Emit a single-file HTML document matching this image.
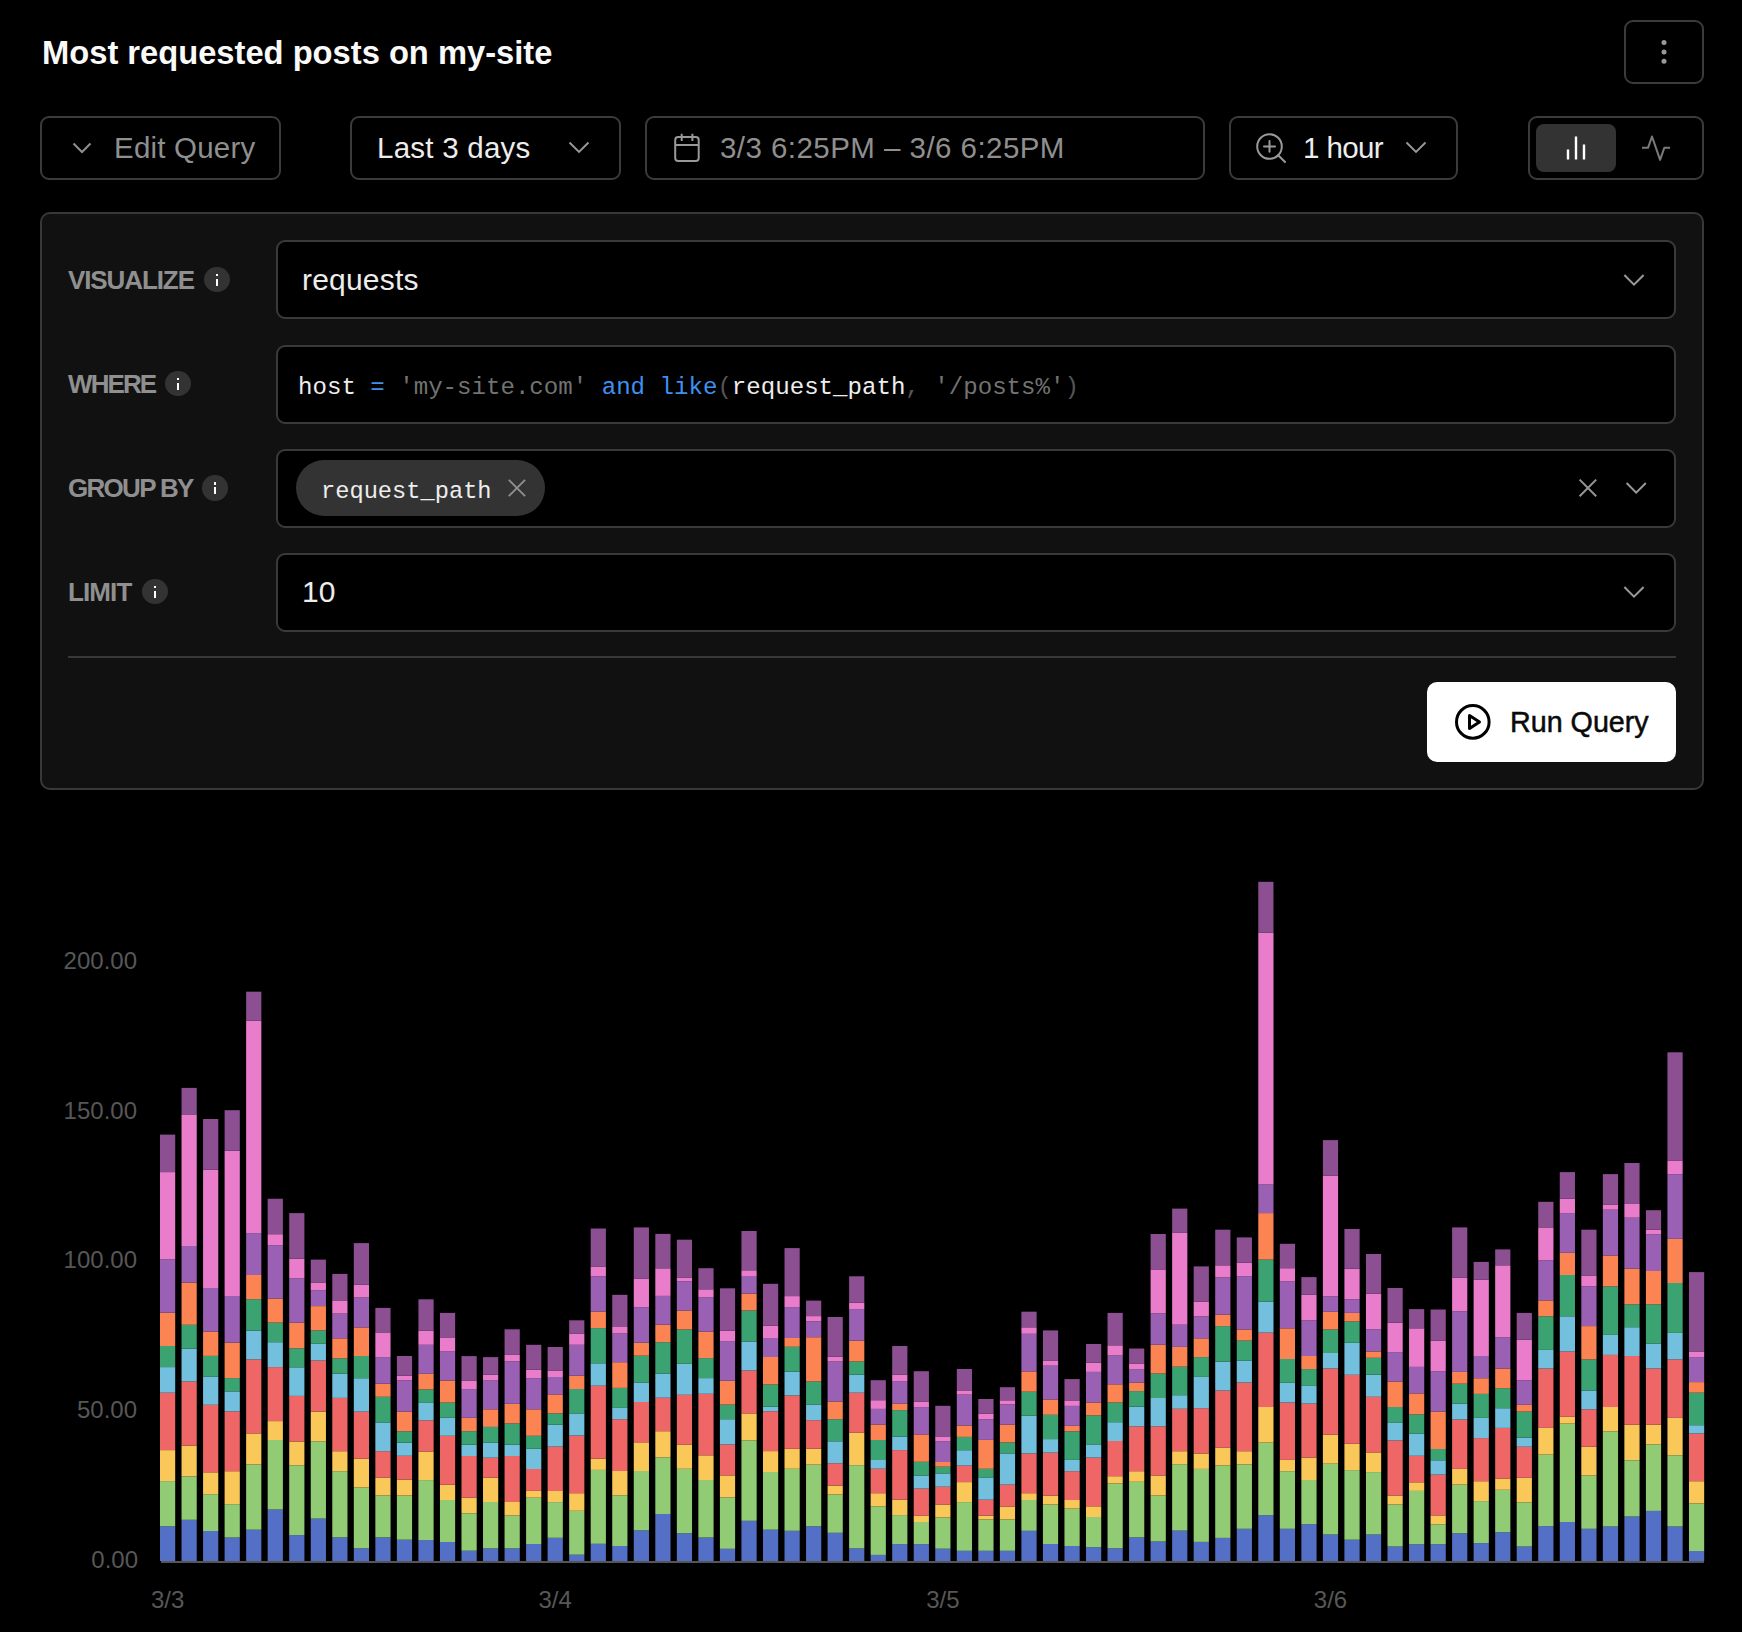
<!DOCTYPE html>
<html><head><meta charset="utf-8">
<style>
*{box-sizing:border-box;margin:0;padding:0}
html,body{width:1742px;height:1632px;background:#000;overflow:hidden}
body{position:relative;font-family:"Liberation Sans",sans-serif;color:#ededed}
.abs{position:absolute}
.title{left:42px;top:31px;font-size:32.7px;font-weight:bold;color:#fafafa;white-space:nowrap;line-height:44px}
.btn{position:absolute;border:2px solid #3b3b3b;border-radius:9px;background:#000}
.txt{position:absolute;white-space:nowrap;line-height:1}
.panel{left:40px;top:212px;width:1664px;height:578px;background:#111;border:2px solid #383838;border-radius:10px}
.label{position:absolute;left:68px;font-size:26px;letter-spacing:-0.9px;font-weight:bold;color:#8f8f8f;white-space:nowrap;line-height:1}
.info{position:absolute;width:25.4px;height:25.4px;border-radius:50%;background:#333}
.info:before{content:"";position:absolute;left:11.6px;top:7.2px;width:2.2px;height:2.2px;background:#fff}
.info:after{content:"";position:absolute;left:11.6px;top:12.2px;width:2.2px;height:6.8px;background:#fff}
.field{position:absolute;left:276px;width:1400px;height:79px;background:#000;border:2px solid #3a3a3a;border-radius:9px}
.mono{font-family:"Liberation Mono",monospace}
</style></head><body>
<div class="abs title">Most requested posts on my-site</div>
<div class="btn" style="left:1624px;top:20px;width:80px;height:64px"></div>
<svg class="abs" style="left:1624px;top:20px" width="80" height="64">
<circle cx="40" cy="22.6" r="2.5" fill="#999"/><circle cx="40" cy="31.9" r="2.5" fill="#999"/><circle cx="40" cy="41.2" r="2.5" fill="#999"/>
</svg>

<!-- toolbar -->
<div class="btn" style="left:40px;top:116px;width:241px;height:64px"></div>
<svg class="abs" style="left:70px;top:138px" width="24" height="20"><path d="M3.5 5.5 L12 14 L20.5 5.5" fill="none" stroke="#8f8f8f" stroke-width="2"/></svg>
<div class="txt" style="left:114px;top:133px;font-size:29.5px;letter-spacing:0.2px;color:#8f8f8f">Edit Query</div>

<div class="btn" style="left:350px;top:116px;width:271px;height:64px"></div>
<div class="txt" style="left:377px;top:133px;font-size:29.5px;letter-spacing:0.25px;color:#ededed">Last 3 days</div>
<svg class="abs" style="left:566px;top:138px" width="26" height="20"><path d="M3.5 4.5 L13 14 L22.5 4.5" fill="none" stroke="#999" stroke-width="1.9"/></svg>

<div class="btn" style="left:645px;top:116px;width:560px;height:64px"></div>
<svg class="abs" style="left:670px;top:130px" width="34" height="34"><rect x="5.2" y="7.1" width="23.5" height="24" rx="3" fill="none" stroke="#999" stroke-width="2"/><path d="M5.2 15 H28.7 M11.7 3.8 V10.9 M22.4 3.8 V10.9" stroke="#999" stroke-width="2"/></svg>
<div class="txt" style="left:720px;top:133px;font-size:29.5px;letter-spacing:0.45px;color:#8f8f8f">3/3 6:25PM – 3/6 6:25PM</div>

<div class="btn" style="left:1229px;top:116px;width:229px;height:64px"></div>
<svg class="abs" style="left:1252px;top:130px" width="40" height="40"><circle cx="17.5" cy="16.5" r="12.3" fill="none" stroke="#999" stroke-width="2"/><path d="M17.5 11 V21.8 M12 16.4 H23 M26.2 25.2 L33 32" stroke="#999" stroke-width="2" stroke-linecap="round"/></svg>
<div class="txt" style="left:1303px;top:133px;font-size:29.5px;letter-spacing:-0.6px;color:#ededed">1 hour</div>
<svg class="abs" style="left:1403px;top:138px" width="26" height="20"><path d="M3.5 4.5 L13 14 L22.5 4.5" fill="none" stroke="#999" stroke-width="1.9"/></svg>

<div class="btn" style="left:1528px;top:116px;width:176px;height:64px"></div>
<div class="abs" style="left:1536px;top:124px;width:80px;height:48px;background:#333;border-radius:8px"></div>
<svg class="abs" style="left:1536px;top:124px" width="80" height="48"><path d="M32 25.5 V35.5 M40 12.5 V35.5 M48 20.5 V35.5" stroke="#fff" stroke-width="2.4"/></svg>
<svg class="abs" style="left:1636px;top:130px" width="40" height="36"><path d="M6 17.8 H12 L16 6.5 L24.1 29.8 L28.3 17.8 H34.1" fill="none" stroke="#7a7a7a" stroke-width="2" stroke-linejoin="round"/></svg>

<!-- panel -->
<div class="abs panel"></div>

<div class="label" style="top:267px;letter-spacing:-1.1px">VISUALIZE</div>
<div class="info" style="left:204.3px;top:267px"></div>
<div class="field" style="top:240px"></div>
<div class="txt" style="left:302px;top:265px;font-size:30px;letter-spacing:0.2px;color:#ededed">requests</div>
<svg class="abs" style="left:1620px;top:268px" width="28" height="22"><path d="M4.4 7 L14 16.6 L23.6 7" fill="none" stroke="#999" stroke-width="2"/></svg>

<div class="label" style="top:371px;letter-spacing:-1.9px">WHERE</div>
<div class="info" style="left:165.3px;top:371px"></div>
<div class="field" style="top:345px"></div>
<div class="txt mono" style="left:298px;top:376px;font-size:24.1px;color:#ededed">host <span style="color:#3e91f0">=</span> <span style="color:#727272">'my-site.com'</span> <span style="color:#3e91f0">and</span> <span style="color:#3e91f0">like</span><span style="color:#555">(</span>request_path<span style="color:#555">,</span> <span style="color:#727272">'/posts%'</span><span style="color:#555">)</span></div>

<div class="label" style="top:475px;letter-spacing:-1.7px">GROUP BY</div>
<div class="info" style="left:202.3px;top:475.2px"></div>
<div class="field" style="top:449px"></div>
<div class="abs" style="left:296px;top:460px;width:249px;height:56px;border-radius:28px;background:#333"></div>
<div class="txt mono" style="left:321px;top:480px;font-size:23.7px;color:#ededed">request_path</div>
<svg class="abs" style="left:505px;top:476px" width="24" height="24"><path d="M3.8 3.8 L20.1 20.1 M20.1 3.8 L3.8 20.1" stroke="#8f8f8f" stroke-width="1.9"/></svg>
<svg class="abs" style="left:1576px;top:476px" width="24" height="24"><path d="M3.6 3.6 L20.2 20.2 M20.2 3.6 L3.6 20.2" stroke="#969696" stroke-width="2"/></svg>
<svg class="abs" style="left:1622px;top:476px" width="28" height="22"><path d="M4.6 7 L14.2 16.6 L23.8 7" fill="none" stroke="#999" stroke-width="2"/></svg>

<div class="label" style="top:579px">LIMIT</div>
<div class="info" style="left:142.3px;top:579px"></div>
<div class="field" style="top:553px"></div>
<div class="txt" style="left:302px;top:577px;font-size:30px;color:#ededed">10</div>
<svg class="abs" style="left:1620px;top:580px" width="28" height="22"><path d="M4.4 7 L14 16.6 L23.6 7" fill="none" stroke="#999" stroke-width="2"/></svg>

<div class="abs" style="left:68px;top:656px;width:1608px;height:2px;background:#383838"></div>
<div class="abs" style="left:1427px;top:682px;width:249px;height:80px;background:#fff;border-radius:10px"></div>
<svg class="abs" style="left:1450px;top:700px" width="46" height="46"><circle cx="22.8" cy="21.9" r="16.3" fill="none" stroke="#000" stroke-width="3"/><path d="M19.5 15.5 L29.5 22 L19.5 28.5 Z" fill="none" stroke="#000" stroke-width="3" stroke-linejoin="round"/></svg>
<div class="txt" style="left:1510px;top:708px;font-size:28.7px;color:#0a0a0a;-webkit-text-stroke:0.5px #0a0a0a">Run Query</div>

<!-- chart -->
<svg class="abs" style="left:0;top:0" width="1742" height="1632">
<g font-family="Liberation Sans" font-size="24" fill="#575757" text-anchor="end">
<text x="137" y="969">200.00</text>
<text x="137" y="1119">150.00</text>
<text x="137" y="1268">100.00</text>
<text x="137" y="1418">50.00</text>
<text x="138" y="1568">0.00</text>
</g>
<g font-family="Liberation Sans" font-size="24" fill="#575757" text-anchor="middle">
<text x="167.6" y="1608">3/3</text>
<text x="555.2" y="1608">3/4</text>
<text x="942.9" y="1608">3/5</text>
<text x="1330.5" y="1608">3/6</text>
</g>
<rect x="160.00" y="1526.30" width="15.20" height="34.70" fill="#5470c6"/>
<rect x="160.00" y="1481.10" width="15.20" height="45.20" fill="#91cc75"/>
<rect x="160.00" y="1450.10" width="15.20" height="31.00" fill="#fac858"/>
<rect x="160.00" y="1392.70" width="15.20" height="57.40" fill="#ee6666"/>
<rect x="160.00" y="1367.10" width="15.20" height="25.60" fill="#73c0de"/>
<rect x="160.00" y="1346.00" width="15.20" height="21.10" fill="#3ba272"/>
<rect x="160.00" y="1312.70" width="15.20" height="33.30" fill="#fc8452"/>
<rect x="160.00" y="1259.20" width="15.20" height="53.50" fill="#9a60b4"/>
<rect x="160.00" y="1172.10" width="15.20" height="87.10" fill="#ea7ccc"/>
<rect x="160.00" y="1134.60" width="15.20" height="37.50" fill="#8b4f92"/>
<rect x="181.53" y="1519.80" width="15.20" height="41.20" fill="#5470c6"/>
<rect x="181.53" y="1476.40" width="15.20" height="43.40" fill="#91cc75"/>
<rect x="181.53" y="1445.60" width="15.20" height="30.80" fill="#fac858"/>
<rect x="181.53" y="1381.50" width="15.20" height="64.10" fill="#ee6666"/>
<rect x="181.53" y="1348.60" width="15.20" height="32.90" fill="#73c0de"/>
<rect x="181.53" y="1324.80" width="15.20" height="23.80" fill="#3ba272"/>
<rect x="181.53" y="1282.60" width="15.20" height="42.20" fill="#fc8452"/>
<rect x="181.53" y="1246.00" width="15.20" height="36.60" fill="#9a60b4"/>
<rect x="181.53" y="1114.40" width="15.20" height="131.60" fill="#ea7ccc"/>
<rect x="181.53" y="1087.90" width="15.20" height="26.50" fill="#8b4f92"/>
<rect x="203.07" y="1531.00" width="15.20" height="30.00" fill="#5470c6"/>
<rect x="203.07" y="1494.20" width="15.20" height="36.80" fill="#91cc75"/>
<rect x="203.07" y="1472.30" width="15.20" height="21.90" fill="#fac858"/>
<rect x="203.07" y="1404.80" width="15.20" height="67.50" fill="#ee6666"/>
<rect x="203.07" y="1376.80" width="15.20" height="28.00" fill="#73c0de"/>
<rect x="203.07" y="1355.90" width="15.20" height="20.90" fill="#3ba272"/>
<rect x="203.07" y="1331.60" width="15.20" height="24.30" fill="#fc8452"/>
<rect x="203.07" y="1288.00" width="15.20" height="43.60" fill="#9a60b4"/>
<rect x="203.07" y="1169.60" width="15.20" height="118.40" fill="#ea7ccc"/>
<rect x="203.07" y="1119.00" width="15.20" height="50.60" fill="#8b4f92"/>
<rect x="224.61" y="1537.50" width="15.20" height="23.50" fill="#5470c6"/>
<rect x="224.61" y="1504.20" width="15.20" height="33.30" fill="#91cc75"/>
<rect x="224.61" y="1471.20" width="15.20" height="33.00" fill="#fac858"/>
<rect x="224.61" y="1411.40" width="15.20" height="59.80" fill="#ee6666"/>
<rect x="224.61" y="1391.40" width="15.20" height="20.00" fill="#73c0de"/>
<rect x="224.61" y="1378.10" width="15.20" height="13.30" fill="#3ba272"/>
<rect x="224.61" y="1342.60" width="15.20" height="35.50" fill="#fc8452"/>
<rect x="224.61" y="1296.00" width="15.20" height="46.60" fill="#9a60b4"/>
<rect x="224.61" y="1150.80" width="15.20" height="145.20" fill="#ea7ccc"/>
<rect x="224.61" y="1110.20" width="15.20" height="40.60" fill="#8b4f92"/>
<rect x="246.14" y="1529.70" width="15.20" height="31.30" fill="#5470c6"/>
<rect x="246.14" y="1464.40" width="15.20" height="65.30" fill="#91cc75"/>
<rect x="246.14" y="1433.40" width="15.20" height="31.00" fill="#fac858"/>
<rect x="246.14" y="1359.40" width="15.20" height="74.00" fill="#ee6666"/>
<rect x="246.14" y="1330.60" width="15.20" height="28.80" fill="#73c0de"/>
<rect x="246.14" y="1299.20" width="15.20" height="31.40" fill="#3ba272"/>
<rect x="246.14" y="1275.00" width="15.20" height="24.20" fill="#fc8452"/>
<rect x="246.14" y="1233.10" width="15.20" height="41.90" fill="#9a60b4"/>
<rect x="246.14" y="1020.60" width="15.20" height="212.50" fill="#ea7ccc"/>
<rect x="246.14" y="991.70" width="15.20" height="28.90" fill="#8b4f92"/>
<rect x="267.68" y="1509.50" width="15.20" height="51.50" fill="#5470c6"/>
<rect x="267.68" y="1440.00" width="15.20" height="69.50" fill="#91cc75"/>
<rect x="267.68" y="1421.10" width="15.20" height="18.90" fill="#fac858"/>
<rect x="267.68" y="1367.10" width="15.20" height="54.00" fill="#ee6666"/>
<rect x="267.68" y="1342.20" width="15.20" height="24.90" fill="#73c0de"/>
<rect x="267.68" y="1322.60" width="15.20" height="19.60" fill="#3ba272"/>
<rect x="267.68" y="1298.50" width="15.20" height="24.10" fill="#fc8452"/>
<rect x="267.68" y="1245.20" width="15.20" height="53.30" fill="#9a60b4"/>
<rect x="267.68" y="1234.20" width="15.20" height="11.00" fill="#ea7ccc"/>
<rect x="267.68" y="1198.75" width="15.20" height="35.45" fill="#8b4f92"/>
<rect x="289.21" y="1535.10" width="15.20" height="25.90" fill="#5470c6"/>
<rect x="289.21" y="1465.30" width="15.20" height="69.80" fill="#91cc75"/>
<rect x="289.21" y="1441.50" width="15.20" height="23.80" fill="#fac858"/>
<rect x="289.21" y="1395.90" width="15.20" height="45.60" fill="#ee6666"/>
<rect x="289.21" y="1367.30" width="15.20" height="28.60" fill="#73c0de"/>
<rect x="289.21" y="1348.30" width="15.20" height="19.00" fill="#3ba272"/>
<rect x="289.21" y="1322.70" width="15.20" height="25.60" fill="#fc8452"/>
<rect x="289.21" y="1278.20" width="15.20" height="44.50" fill="#9a60b4"/>
<rect x="289.21" y="1258.70" width="15.20" height="19.50" fill="#ea7ccc"/>
<rect x="289.21" y="1213.10" width="15.20" height="45.60" fill="#8b4f92"/>
<rect x="310.75" y="1518.60" width="15.20" height="42.40" fill="#5470c6"/>
<rect x="310.75" y="1441.30" width="15.20" height="77.30" fill="#91cc75"/>
<rect x="310.75" y="1411.60" width="15.20" height="29.70" fill="#fac858"/>
<rect x="310.75" y="1360.50" width="15.20" height="51.10" fill="#ee6666"/>
<rect x="310.75" y="1343.80" width="15.20" height="16.70" fill="#73c0de"/>
<rect x="310.75" y="1330.40" width="15.20" height="13.40" fill="#3ba272"/>
<rect x="310.75" y="1306.10" width="15.20" height="24.30" fill="#fc8452"/>
<rect x="310.75" y="1290.20" width="15.20" height="15.90" fill="#9a60b4"/>
<rect x="310.75" y="1282.50" width="15.20" height="7.70" fill="#ea7ccc"/>
<rect x="310.75" y="1259.60" width="15.20" height="22.90" fill="#8b4f92"/>
<rect x="332.28" y="1537.40" width="15.20" height="23.60" fill="#5470c6"/>
<rect x="332.28" y="1471.20" width="15.20" height="66.20" fill="#91cc75"/>
<rect x="332.28" y="1451.20" width="15.20" height="20.00" fill="#fac858"/>
<rect x="332.28" y="1397.90" width="15.20" height="53.30" fill="#ee6666"/>
<rect x="332.28" y="1373.70" width="15.20" height="24.20" fill="#73c0de"/>
<rect x="332.28" y="1358.30" width="15.20" height="15.40" fill="#3ba272"/>
<rect x="332.28" y="1338.30" width="15.20" height="20.00" fill="#fc8452"/>
<rect x="332.28" y="1313.60" width="15.20" height="24.70" fill="#9a60b4"/>
<rect x="332.28" y="1300.40" width="15.20" height="13.20" fill="#ea7ccc"/>
<rect x="332.28" y="1273.90" width="15.20" height="26.50" fill="#8b4f92"/>
<rect x="353.81" y="1548.30" width="15.20" height="12.70" fill="#5470c6"/>
<rect x="353.81" y="1487.50" width="15.20" height="60.80" fill="#91cc75"/>
<rect x="353.81" y="1458.70" width="15.20" height="28.80" fill="#fac858"/>
<rect x="353.81" y="1411.60" width="15.20" height="47.10" fill="#ee6666"/>
<rect x="353.81" y="1378.20" width="15.20" height="33.40" fill="#73c0de"/>
<rect x="353.81" y="1356.00" width="15.20" height="22.20" fill="#3ba272"/>
<rect x="353.81" y="1327.40" width="15.20" height="28.60" fill="#fc8452"/>
<rect x="353.81" y="1297.50" width="15.20" height="29.90" fill="#9a60b4"/>
<rect x="353.81" y="1284.80" width="15.20" height="12.70" fill="#ea7ccc"/>
<rect x="353.81" y="1243.10" width="15.20" height="41.70" fill="#8b4f92"/>
<rect x="375.35" y="1537.40" width="15.20" height="23.60" fill="#5470c6"/>
<rect x="375.35" y="1495.50" width="15.20" height="41.90" fill="#91cc75"/>
<rect x="375.35" y="1477.50" width="15.20" height="18.00" fill="#fac858"/>
<rect x="375.35" y="1451.20" width="15.20" height="26.30" fill="#ee6666"/>
<rect x="375.35" y="1422.40" width="15.20" height="28.80" fill="#73c0de"/>
<rect x="375.35" y="1396.80" width="15.20" height="25.60" fill="#3ba272"/>
<rect x="375.35" y="1383.70" width="15.20" height="13.10" fill="#fc8452"/>
<rect x="375.35" y="1357.10" width="15.20" height="26.60" fill="#9a60b4"/>
<rect x="375.35" y="1332.40" width="15.20" height="24.70" fill="#ea7ccc"/>
<rect x="375.35" y="1307.90" width="15.20" height="24.50" fill="#8b4f92"/>
<rect x="396.88" y="1539.70" width="15.20" height="21.30" fill="#5470c6"/>
<rect x="396.88" y="1495.50" width="15.20" height="44.20" fill="#91cc75"/>
<rect x="396.88" y="1479.60" width="15.20" height="15.90" fill="#fac858"/>
<rect x="396.88" y="1455.80" width="15.20" height="23.80" fill="#ee6666"/>
<rect x="396.88" y="1442.60" width="15.20" height="13.20" fill="#73c0de"/>
<rect x="396.88" y="1431.30" width="15.20" height="11.30" fill="#3ba272"/>
<rect x="396.88" y="1411.60" width="15.20" height="19.70" fill="#fc8452"/>
<rect x="396.88" y="1380.30" width="15.20" height="31.30" fill="#9a60b4"/>
<rect x="396.88" y="1375.70" width="15.20" height="4.60" fill="#ea7ccc"/>
<rect x="396.88" y="1356.00" width="15.20" height="19.70" fill="#8b4f92"/>
<rect x="418.42" y="1540.00" width="15.20" height="21.00" fill="#5470c6"/>
<rect x="418.42" y="1480.10" width="15.20" height="59.90" fill="#91cc75"/>
<rect x="418.42" y="1451.50" width="15.20" height="28.60" fill="#fac858"/>
<rect x="418.42" y="1420.30" width="15.20" height="31.20" fill="#ee6666"/>
<rect x="418.42" y="1402.90" width="15.20" height="17.40" fill="#73c0de"/>
<rect x="418.42" y="1389.40" width="15.20" height="13.50" fill="#3ba272"/>
<rect x="418.42" y="1373.80" width="15.20" height="15.60" fill="#fc8452"/>
<rect x="418.42" y="1344.80" width="15.20" height="29.00" fill="#9a60b4"/>
<rect x="418.42" y="1330.60" width="15.20" height="14.20" fill="#ea7ccc"/>
<rect x="418.42" y="1299.30" width="15.20" height="31.30" fill="#8b4f92"/>
<rect x="439.95" y="1542.00" width="15.20" height="19.00" fill="#5470c6"/>
<rect x="439.95" y="1500.00" width="15.20" height="42.00" fill="#91cc75"/>
<rect x="439.95" y="1484.70" width="15.20" height="15.30" fill="#fac858"/>
<rect x="439.95" y="1435.80" width="15.20" height="48.90" fill="#ee6666"/>
<rect x="439.95" y="1417.80" width="15.20" height="18.00" fill="#73c0de"/>
<rect x="439.95" y="1402.60" width="15.20" height="15.20" fill="#3ba272"/>
<rect x="439.95" y="1380.50" width="15.20" height="22.10" fill="#fc8452"/>
<rect x="439.95" y="1351.50" width="15.20" height="29.00" fill="#9a60b4"/>
<rect x="439.95" y="1337.40" width="15.20" height="14.10" fill="#ea7ccc"/>
<rect x="439.95" y="1312.90" width="15.20" height="24.50" fill="#8b4f92"/>
<rect x="461.49" y="1550.70" width="15.20" height="10.30" fill="#5470c6"/>
<rect x="461.49" y="1513.30" width="15.20" height="37.40" fill="#91cc75"/>
<rect x="461.49" y="1497.70" width="15.20" height="15.60" fill="#fac858"/>
<rect x="461.49" y="1456.00" width="15.20" height="41.70" fill="#ee6666"/>
<rect x="461.49" y="1444.70" width="15.20" height="11.30" fill="#73c0de"/>
<rect x="461.49" y="1431.20" width="15.20" height="13.50" fill="#3ba272"/>
<rect x="461.49" y="1417.80" width="15.20" height="13.40" fill="#fc8452"/>
<rect x="461.49" y="1389.10" width="15.20" height="28.70" fill="#9a60b4"/>
<rect x="461.49" y="1380.50" width="15.20" height="8.60" fill="#ea7ccc"/>
<rect x="461.49" y="1356.10" width="15.20" height="24.40" fill="#8b4f92"/>
<rect x="483.02" y="1548.40" width="15.20" height="12.60" fill="#5470c6"/>
<rect x="483.02" y="1502.00" width="15.20" height="46.40" fill="#91cc75"/>
<rect x="483.02" y="1477.60" width="15.20" height="24.40" fill="#fac858"/>
<rect x="483.02" y="1457.70" width="15.20" height="19.90" fill="#ee6666"/>
<rect x="483.02" y="1442.50" width="15.20" height="15.20" fill="#73c0de"/>
<rect x="483.02" y="1426.90" width="15.20" height="15.60" fill="#3ba272"/>
<rect x="483.02" y="1409.30" width="15.20" height="17.60" fill="#fc8452"/>
<rect x="483.02" y="1380.50" width="15.20" height="28.80" fill="#9a60b4"/>
<rect x="483.02" y="1374.80" width="15.20" height="5.70" fill="#ea7ccc"/>
<rect x="483.02" y="1357.10" width="15.20" height="17.70" fill="#8b4f92"/>
<rect x="504.56" y="1548.40" width="15.20" height="12.60" fill="#5470c6"/>
<rect x="504.56" y="1515.50" width="15.20" height="32.90" fill="#91cc75"/>
<rect x="504.56" y="1502.00" width="15.20" height="13.50" fill="#fac858"/>
<rect x="504.56" y="1456.00" width="15.20" height="46.00" fill="#ee6666"/>
<rect x="504.56" y="1444.70" width="15.20" height="11.30" fill="#73c0de"/>
<rect x="504.56" y="1423.50" width="15.20" height="21.20" fill="#3ba272"/>
<rect x="504.56" y="1403.80" width="15.20" height="19.70" fill="#fc8452"/>
<rect x="504.56" y="1361.30" width="15.20" height="42.50" fill="#9a60b4"/>
<rect x="504.56" y="1354.90" width="15.20" height="6.40" fill="#ea7ccc"/>
<rect x="504.56" y="1329.30" width="15.20" height="25.60" fill="#8b4f92"/>
<rect x="526.10" y="1544.00" width="15.20" height="17.00" fill="#5470c6"/>
<rect x="526.10" y="1497.70" width="15.20" height="46.30" fill="#91cc75"/>
<rect x="526.10" y="1490.90" width="15.20" height="6.80" fill="#fac858"/>
<rect x="526.10" y="1469.00" width="15.20" height="21.90" fill="#ee6666"/>
<rect x="526.10" y="1448.80" width="15.20" height="20.20" fill="#73c0de"/>
<rect x="526.10" y="1435.80" width="15.20" height="13.00" fill="#3ba272"/>
<rect x="526.10" y="1409.30" width="15.20" height="26.50" fill="#fc8452"/>
<rect x="526.10" y="1378.20" width="15.20" height="31.10" fill="#9a60b4"/>
<rect x="526.10" y="1369.70" width="15.20" height="8.50" fill="#ea7ccc"/>
<rect x="526.10" y="1344.80" width="15.20" height="24.90" fill="#8b4f92"/>
<rect x="547.63" y="1537.80" width="15.20" height="23.20" fill="#5470c6"/>
<rect x="547.63" y="1502.10" width="15.20" height="35.70" fill="#91cc75"/>
<rect x="547.63" y="1491.00" width="15.20" height="11.10" fill="#fac858"/>
<rect x="547.63" y="1446.60" width="15.20" height="44.40" fill="#ee6666"/>
<rect x="547.63" y="1424.70" width="15.20" height="21.90" fill="#73c0de"/>
<rect x="547.63" y="1413.40" width="15.20" height="11.30" fill="#3ba272"/>
<rect x="547.63" y="1394.40" width="15.20" height="19.00" fill="#fc8452"/>
<rect x="547.63" y="1377.00" width="15.20" height="17.40" fill="#9a60b4"/>
<rect x="547.63" y="1370.50" width="15.20" height="6.50" fill="#ea7ccc"/>
<rect x="547.63" y="1347.00" width="15.20" height="23.50" fill="#8b4f92"/>
<rect x="569.16" y="1554.70" width="15.20" height="6.30" fill="#5470c6"/>
<rect x="569.16" y="1510.80" width="15.20" height="43.90" fill="#91cc75"/>
<rect x="569.16" y="1493.20" width="15.20" height="17.60" fill="#fac858"/>
<rect x="569.16" y="1435.50" width="15.20" height="57.70" fill="#ee6666"/>
<rect x="569.16" y="1413.40" width="15.20" height="22.10" fill="#73c0de"/>
<rect x="569.16" y="1389.00" width="15.20" height="24.40" fill="#3ba272"/>
<rect x="569.16" y="1375.70" width="15.20" height="13.30" fill="#fc8452"/>
<rect x="569.16" y="1344.80" width="15.20" height="30.90" fill="#9a60b4"/>
<rect x="569.16" y="1333.50" width="15.20" height="11.30" fill="#ea7ccc"/>
<rect x="569.16" y="1320.30" width="15.20" height="13.20" fill="#8b4f92"/>
<rect x="590.70" y="1543.80" width="15.20" height="17.20" fill="#5470c6"/>
<rect x="590.70" y="1469.90" width="15.20" height="73.90" fill="#91cc75"/>
<rect x="590.70" y="1458.60" width="15.20" height="11.30" fill="#fac858"/>
<rect x="590.70" y="1385.70" width="15.20" height="72.90" fill="#ee6666"/>
<rect x="590.70" y="1363.30" width="15.20" height="22.40" fill="#73c0de"/>
<rect x="590.70" y="1328.10" width="15.20" height="35.20" fill="#3ba272"/>
<rect x="590.70" y="1311.60" width="15.20" height="16.50" fill="#fc8452"/>
<rect x="590.70" y="1276.30" width="15.20" height="35.30" fill="#9a60b4"/>
<rect x="590.70" y="1266.50" width="15.20" height="9.80" fill="#ea7ccc"/>
<rect x="590.70" y="1228.50" width="15.20" height="38.00" fill="#8b4f92"/>
<rect x="612.24" y="1546.00" width="15.20" height="15.00" fill="#5470c6"/>
<rect x="612.24" y="1495.30" width="15.20" height="50.70" fill="#91cc75"/>
<rect x="612.24" y="1471.00" width="15.20" height="24.30" fill="#fac858"/>
<rect x="612.24" y="1419.20" width="15.20" height="51.80" fill="#ee6666"/>
<rect x="612.24" y="1407.90" width="15.20" height="11.30" fill="#73c0de"/>
<rect x="612.24" y="1387.90" width="15.20" height="20.00" fill="#3ba272"/>
<rect x="612.24" y="1362.20" width="15.20" height="25.70" fill="#fc8452"/>
<rect x="612.24" y="1333.50" width="15.20" height="28.70" fill="#9a60b4"/>
<rect x="612.24" y="1327.00" width="15.20" height="6.50" fill="#ea7ccc"/>
<rect x="612.24" y="1294.80" width="15.20" height="32.20" fill="#8b4f92"/>
<rect x="633.77" y="1530.40" width="15.20" height="30.60" fill="#5470c6"/>
<rect x="633.77" y="1471.00" width="15.20" height="59.40" fill="#91cc75"/>
<rect x="633.77" y="1442.30" width="15.20" height="28.70" fill="#fac858"/>
<rect x="633.77" y="1402.00" width="15.20" height="40.30" fill="#ee6666"/>
<rect x="633.77" y="1382.50" width="15.20" height="19.50" fill="#73c0de"/>
<rect x="633.77" y="1355.70" width="15.20" height="26.80" fill="#3ba272"/>
<rect x="633.77" y="1342.70" width="15.20" height="13.00" fill="#fc8452"/>
<rect x="633.77" y="1307.20" width="15.20" height="35.50" fill="#9a60b4"/>
<rect x="633.77" y="1278.50" width="15.20" height="28.70" fill="#ea7ccc"/>
<rect x="633.77" y="1227.40" width="15.20" height="51.10" fill="#8b4f92"/>
<rect x="655.31" y="1514.00" width="15.20" height="47.00" fill="#5470c6"/>
<rect x="655.31" y="1457.30" width="15.20" height="56.70" fill="#91cc75"/>
<rect x="655.31" y="1431.20" width="15.20" height="26.10" fill="#fac858"/>
<rect x="655.31" y="1397.70" width="15.20" height="33.50" fill="#ee6666"/>
<rect x="655.31" y="1373.50" width="15.20" height="24.20" fill="#73c0de"/>
<rect x="655.31" y="1342.20" width="15.20" height="31.30" fill="#3ba272"/>
<rect x="655.31" y="1324.60" width="15.20" height="17.60" fill="#fc8452"/>
<rect x="655.31" y="1295.90" width="15.20" height="28.70" fill="#9a60b4"/>
<rect x="655.31" y="1268.30" width="15.20" height="27.60" fill="#ea7ccc"/>
<rect x="655.31" y="1233.90" width="15.20" height="34.40" fill="#8b4f92"/>
<rect x="676.84" y="1533.30" width="15.20" height="27.70" fill="#5470c6"/>
<rect x="676.84" y="1468.80" width="15.20" height="64.50" fill="#91cc75"/>
<rect x="676.84" y="1444.50" width="15.20" height="24.30" fill="#fac858"/>
<rect x="676.84" y="1394.80" width="15.20" height="49.70" fill="#ee6666"/>
<rect x="676.84" y="1363.80" width="15.20" height="31.00" fill="#73c0de"/>
<rect x="676.84" y="1329.50" width="15.20" height="34.30" fill="#3ba272"/>
<rect x="676.84" y="1310.50" width="15.20" height="19.00" fill="#fc8452"/>
<rect x="676.84" y="1281.30" width="15.20" height="29.20" fill="#9a60b4"/>
<rect x="676.84" y="1277.50" width="15.20" height="3.80" fill="#ea7ccc"/>
<rect x="676.84" y="1239.70" width="15.20" height="37.80" fill="#8b4f92"/>
<rect x="698.38" y="1537.50" width="15.20" height="23.50" fill="#5470c6"/>
<rect x="698.38" y="1480.00" width="15.20" height="57.50" fill="#91cc75"/>
<rect x="698.38" y="1455.30" width="15.20" height="24.70" fill="#fac858"/>
<rect x="698.38" y="1393.80" width="15.20" height="61.50" fill="#ee6666"/>
<rect x="698.38" y="1378.10" width="15.20" height="15.70" fill="#73c0de"/>
<rect x="698.38" y="1358.10" width="15.20" height="20.00" fill="#3ba272"/>
<rect x="698.38" y="1331.60" width="15.20" height="26.50" fill="#fc8452"/>
<rect x="698.38" y="1297.20" width="15.20" height="34.40" fill="#9a60b4"/>
<rect x="698.38" y="1289.30" width="15.20" height="7.90" fill="#ea7ccc"/>
<rect x="698.38" y="1268.20" width="15.20" height="21.10" fill="#8b4f92"/>
<rect x="719.91" y="1548.80" width="15.20" height="12.20" fill="#5470c6"/>
<rect x="719.91" y="1497.40" width="15.20" height="51.40" fill="#91cc75"/>
<rect x="719.91" y="1475.40" width="15.20" height="22.00" fill="#fac858"/>
<rect x="719.91" y="1444.50" width="15.20" height="30.90" fill="#ee6666"/>
<rect x="719.91" y="1419.20" width="15.20" height="25.30" fill="#73c0de"/>
<rect x="719.91" y="1404.60" width="15.20" height="14.60" fill="#3ba272"/>
<rect x="719.91" y="1380.70" width="15.20" height="23.90" fill="#fc8452"/>
<rect x="719.91" y="1341.10" width="15.20" height="39.60" fill="#9a60b4"/>
<rect x="719.91" y="1330.60" width="15.20" height="10.50" fill="#ea7ccc"/>
<rect x="719.91" y="1288.30" width="15.20" height="42.30" fill="#8b4f92"/>
<rect x="741.45" y="1520.80" width="15.20" height="40.20" fill="#5470c6"/>
<rect x="741.45" y="1440.30" width="15.20" height="80.50" fill="#91cc75"/>
<rect x="741.45" y="1413.40" width="15.20" height="26.90" fill="#fac858"/>
<rect x="741.45" y="1370.50" width="15.20" height="42.90" fill="#ee6666"/>
<rect x="741.45" y="1341.60" width="15.20" height="28.90" fill="#73c0de"/>
<rect x="741.45" y="1310.50" width="15.20" height="31.10" fill="#3ba272"/>
<rect x="741.45" y="1293.60" width="15.20" height="16.90" fill="#fc8452"/>
<rect x="741.45" y="1276.00" width="15.20" height="17.60" fill="#9a60b4"/>
<rect x="741.45" y="1270.30" width="15.20" height="5.70" fill="#ea7ccc"/>
<rect x="741.45" y="1231.00" width="15.20" height="39.30" fill="#8b4f92"/>
<rect x="762.98" y="1529.70" width="15.20" height="31.30" fill="#5470c6"/>
<rect x="762.98" y="1472.00" width="15.20" height="57.70" fill="#91cc75"/>
<rect x="762.98" y="1451.10" width="15.20" height="20.90" fill="#fac858"/>
<rect x="762.98" y="1411.30" width="15.20" height="39.80" fill="#ee6666"/>
<rect x="762.98" y="1406.70" width="15.20" height="4.60" fill="#73c0de"/>
<rect x="762.98" y="1384.50" width="15.20" height="22.20" fill="#3ba272"/>
<rect x="762.98" y="1357.00" width="15.20" height="27.50" fill="#fc8452"/>
<rect x="762.98" y="1338.00" width="15.20" height="19.00" fill="#9a60b4"/>
<rect x="762.98" y="1325.70" width="15.20" height="12.30" fill="#ea7ccc"/>
<rect x="762.98" y="1283.80" width="15.20" height="41.90" fill="#8b4f92"/>
<rect x="784.51" y="1530.80" width="15.20" height="30.20" fill="#5470c6"/>
<rect x="784.51" y="1468.80" width="15.20" height="62.00" fill="#91cc75"/>
<rect x="784.51" y="1448.80" width="15.20" height="20.00" fill="#fac858"/>
<rect x="784.51" y="1395.50" width="15.20" height="53.30" fill="#ee6666"/>
<rect x="784.51" y="1371.60" width="15.20" height="23.90" fill="#73c0de"/>
<rect x="784.51" y="1346.80" width="15.20" height="24.80" fill="#3ba272"/>
<rect x="784.51" y="1338.00" width="15.20" height="8.80" fill="#fc8452"/>
<rect x="784.51" y="1307.10" width="15.20" height="30.90" fill="#9a60b4"/>
<rect x="784.51" y="1296.10" width="15.20" height="11.00" fill="#ea7ccc"/>
<rect x="784.51" y="1248.10" width="15.20" height="48.00" fill="#8b4f92"/>
<rect x="806.05" y="1526.30" width="15.20" height="34.70" fill="#5470c6"/>
<rect x="806.05" y="1464.60" width="15.20" height="61.70" fill="#91cc75"/>
<rect x="806.05" y="1448.70" width="15.20" height="15.90" fill="#fac858"/>
<rect x="806.05" y="1420.20" width="15.20" height="28.50" fill="#ee6666"/>
<rect x="806.05" y="1404.50" width="15.20" height="15.70" fill="#73c0de"/>
<rect x="806.05" y="1381.50" width="15.20" height="23.00" fill="#3ba272"/>
<rect x="806.05" y="1337.20" width="15.20" height="44.30" fill="#fc8452"/>
<rect x="806.05" y="1321.30" width="15.20" height="15.90" fill="#9a60b4"/>
<rect x="806.05" y="1316.10" width="15.20" height="5.20" fill="#ea7ccc"/>
<rect x="806.05" y="1300.60" width="15.20" height="15.50" fill="#8b4f92"/>
<rect x="827.59" y="1532.80" width="15.20" height="28.20" fill="#5470c6"/>
<rect x="827.59" y="1494.50" width="15.20" height="38.30" fill="#91cc75"/>
<rect x="827.59" y="1485.60" width="15.20" height="8.90" fill="#fac858"/>
<rect x="827.59" y="1463.30" width="15.20" height="22.30" fill="#ee6666"/>
<rect x="827.59" y="1441.30" width="15.20" height="22.00" fill="#73c0de"/>
<rect x="827.59" y="1419.20" width="15.20" height="22.10" fill="#3ba272"/>
<rect x="827.59" y="1401.50" width="15.20" height="17.70" fill="#fc8452"/>
<rect x="827.59" y="1361.50" width="15.20" height="40.00" fill="#9a60b4"/>
<rect x="827.59" y="1356.80" width="15.20" height="4.70" fill="#ea7ccc"/>
<rect x="827.59" y="1317.00" width="15.20" height="39.80" fill="#8b4f92"/>
<rect x="849.12" y="1548.40" width="15.20" height="12.60" fill="#5470c6"/>
<rect x="849.12" y="1465.20" width="15.20" height="83.20" fill="#91cc75"/>
<rect x="849.12" y="1432.50" width="15.20" height="32.70" fill="#fac858"/>
<rect x="849.12" y="1392.70" width="15.20" height="39.80" fill="#ee6666"/>
<rect x="849.12" y="1374.60" width="15.20" height="18.10" fill="#73c0de"/>
<rect x="849.12" y="1361.50" width="15.20" height="13.10" fill="#3ba272"/>
<rect x="849.12" y="1340.70" width="15.20" height="20.80" fill="#fc8452"/>
<rect x="849.12" y="1309.10" width="15.20" height="31.60" fill="#9a60b4"/>
<rect x="849.12" y="1302.60" width="15.20" height="6.50" fill="#ea7ccc"/>
<rect x="849.12" y="1276.30" width="15.20" height="26.30" fill="#8b4f92"/>
<rect x="870.65" y="1554.90" width="15.20" height="6.10" fill="#5470c6"/>
<rect x="870.65" y="1506.30" width="15.20" height="48.60" fill="#91cc75"/>
<rect x="870.65" y="1493.20" width="15.20" height="13.10" fill="#fac858"/>
<rect x="870.65" y="1468.70" width="15.20" height="24.50" fill="#ee6666"/>
<rect x="870.65" y="1460.00" width="15.20" height="8.70" fill="#73c0de"/>
<rect x="870.65" y="1440.00" width="15.20" height="20.00" fill="#3ba272"/>
<rect x="870.65" y="1424.50" width="15.20" height="15.50" fill="#fc8452"/>
<rect x="870.65" y="1408.90" width="15.20" height="15.60" fill="#9a60b4"/>
<rect x="870.65" y="1400.20" width="15.20" height="8.70" fill="#ea7ccc"/>
<rect x="870.65" y="1380.20" width="15.20" height="20.00" fill="#8b4f92"/>
<rect x="892.19" y="1544.10" width="15.20" height="16.90" fill="#5470c6"/>
<rect x="892.19" y="1515.10" width="15.20" height="29.00" fill="#91cc75"/>
<rect x="892.19" y="1499.60" width="15.20" height="15.50" fill="#fac858"/>
<rect x="892.19" y="1450.10" width="15.20" height="49.50" fill="#ee6666"/>
<rect x="892.19" y="1436.60" width="15.20" height="13.50" fill="#73c0de"/>
<rect x="892.19" y="1410.10" width="15.20" height="26.50" fill="#3ba272"/>
<rect x="892.19" y="1403.50" width="15.20" height="6.60" fill="#fc8452"/>
<rect x="892.19" y="1381.10" width="15.20" height="22.40" fill="#9a60b4"/>
<rect x="892.19" y="1374.60" width="15.20" height="6.50" fill="#ea7ccc"/>
<rect x="892.19" y="1346.00" width="15.20" height="28.60" fill="#8b4f92"/>
<rect x="913.73" y="1544.10" width="15.20" height="16.90" fill="#5470c6"/>
<rect x="913.73" y="1522.00" width="15.20" height="22.10" fill="#91cc75"/>
<rect x="913.73" y="1515.50" width="15.20" height="6.50" fill="#fac858"/>
<rect x="913.73" y="1488.60" width="15.20" height="26.90" fill="#ee6666"/>
<rect x="913.73" y="1475.50" width="15.20" height="13.10" fill="#73c0de"/>
<rect x="913.73" y="1461.80" width="15.20" height="13.70" fill="#3ba272"/>
<rect x="913.73" y="1434.40" width="15.20" height="27.40" fill="#fc8452"/>
<rect x="913.73" y="1407.10" width="15.20" height="27.30" fill="#9a60b4"/>
<rect x="913.73" y="1401.50" width="15.20" height="5.60" fill="#ea7ccc"/>
<rect x="913.73" y="1371.20" width="15.20" height="30.30" fill="#8b4f92"/>
<rect x="935.26" y="1548.70" width="15.20" height="12.30" fill="#5470c6"/>
<rect x="935.26" y="1517.50" width="15.20" height="31.20" fill="#91cc75"/>
<rect x="935.26" y="1504.50" width="15.20" height="13.00" fill="#fac858"/>
<rect x="935.26" y="1486.70" width="15.20" height="17.80" fill="#ee6666"/>
<rect x="935.26" y="1473.40" width="15.20" height="13.30" fill="#73c0de"/>
<rect x="935.26" y="1466.70" width="15.20" height="6.70" fill="#3ba272"/>
<rect x="935.26" y="1462.00" width="15.20" height="4.70" fill="#fc8452"/>
<rect x="935.26" y="1441.20" width="15.20" height="20.80" fill="#9a60b4"/>
<rect x="935.26" y="1436.40" width="15.20" height="4.80" fill="#ea7ccc"/>
<rect x="935.26" y="1405.80" width="15.20" height="30.60" fill="#8b4f92"/>
<rect x="956.79" y="1550.80" width="15.20" height="10.20" fill="#5470c6"/>
<rect x="956.79" y="1502.10" width="15.20" height="48.70" fill="#91cc75"/>
<rect x="956.79" y="1482.10" width="15.20" height="20.00" fill="#fac858"/>
<rect x="956.79" y="1465.60" width="15.20" height="16.50" fill="#ee6666"/>
<rect x="956.79" y="1450.20" width="15.20" height="15.40" fill="#73c0de"/>
<rect x="956.79" y="1436.90" width="15.20" height="13.30" fill="#3ba272"/>
<rect x="956.79" y="1425.50" width="15.20" height="11.40" fill="#fc8452"/>
<rect x="956.79" y="1394.60" width="15.20" height="30.90" fill="#9a60b4"/>
<rect x="956.79" y="1390.40" width="15.20" height="4.20" fill="#ea7ccc"/>
<rect x="956.79" y="1369.00" width="15.20" height="21.40" fill="#8b4f92"/>
<rect x="978.33" y="1550.80" width="15.20" height="10.20" fill="#5470c6"/>
<rect x="978.33" y="1519.50" width="15.20" height="31.30" fill="#91cc75"/>
<rect x="978.33" y="1515.60" width="15.20" height="3.90" fill="#fac858"/>
<rect x="978.33" y="1499.70" width="15.20" height="15.90" fill="#ee6666"/>
<rect x="978.33" y="1477.40" width="15.20" height="22.30" fill="#73c0de"/>
<rect x="978.33" y="1468.80" width="15.20" height="8.60" fill="#3ba272"/>
<rect x="978.33" y="1439.90" width="15.20" height="28.90" fill="#fc8452"/>
<rect x="978.33" y="1419.30" width="15.20" height="20.60" fill="#9a60b4"/>
<rect x="978.33" y="1413.60" width="15.20" height="5.70" fill="#ea7ccc"/>
<rect x="978.33" y="1399.00" width="15.20" height="14.60" fill="#8b4f92"/>
<rect x="999.87" y="1550.80" width="15.20" height="10.20" fill="#5470c6"/>
<rect x="999.87" y="1519.50" width="15.20" height="31.30" fill="#91cc75"/>
<rect x="999.87" y="1506.50" width="15.20" height="13.00" fill="#fac858"/>
<rect x="999.87" y="1484.60" width="15.20" height="21.90" fill="#ee6666"/>
<rect x="999.87" y="1453.40" width="15.20" height="31.20" fill="#73c0de"/>
<rect x="999.87" y="1442.40" width="15.20" height="11.00" fill="#3ba272"/>
<rect x="999.87" y="1424.50" width="15.20" height="17.90" fill="#fc8452"/>
<rect x="999.87" y="1404.40" width="15.20" height="20.10" fill="#9a60b4"/>
<rect x="999.87" y="1400.30" width="15.20" height="4.10" fill="#ea7ccc"/>
<rect x="999.87" y="1387.20" width="15.20" height="13.10" fill="#8b4f92"/>
<rect x="1021.40" y="1530.80" width="15.20" height="30.20" fill="#5470c6"/>
<rect x="1021.40" y="1500.00" width="15.20" height="30.80" fill="#91cc75"/>
<rect x="1021.40" y="1493.20" width="15.20" height="6.80" fill="#fac858"/>
<rect x="1021.40" y="1453.40" width="15.20" height="39.80" fill="#ee6666"/>
<rect x="1021.40" y="1415.70" width="15.20" height="37.70" fill="#73c0de"/>
<rect x="1021.40" y="1391.70" width="15.20" height="24.00" fill="#3ba272"/>
<rect x="1021.40" y="1371.40" width="15.20" height="20.30" fill="#fc8452"/>
<rect x="1021.40" y="1333.80" width="15.20" height="37.60" fill="#9a60b4"/>
<rect x="1021.40" y="1327.30" width="15.20" height="6.50" fill="#ea7ccc"/>
<rect x="1021.40" y="1311.70" width="15.20" height="15.60" fill="#8b4f92"/>
<rect x="1042.93" y="1544.00" width="15.20" height="17.00" fill="#5470c6"/>
<rect x="1042.93" y="1504.50" width="15.20" height="39.50" fill="#91cc75"/>
<rect x="1042.93" y="1495.60" width="15.20" height="8.90" fill="#fac858"/>
<rect x="1042.93" y="1452.60" width="15.20" height="43.00" fill="#ee6666"/>
<rect x="1042.93" y="1439.10" width="15.20" height="13.50" fill="#73c0de"/>
<rect x="1042.93" y="1414.80" width="15.20" height="24.30" fill="#3ba272"/>
<rect x="1042.93" y="1399.50" width="15.20" height="15.30" fill="#fc8452"/>
<rect x="1042.93" y="1365.70" width="15.20" height="33.80" fill="#9a60b4"/>
<rect x="1042.93" y="1360.90" width="15.20" height="4.80" fill="#ea7ccc"/>
<rect x="1042.93" y="1330.40" width="15.20" height="30.50" fill="#8b4f92"/>
<rect x="1064.47" y="1546.00" width="15.20" height="15.00" fill="#5470c6"/>
<rect x="1064.47" y="1508.60" width="15.20" height="37.40" fill="#91cc75"/>
<rect x="1064.47" y="1500.00" width="15.20" height="8.60" fill="#fac858"/>
<rect x="1064.47" y="1471.20" width="15.20" height="28.80" fill="#ee6666"/>
<rect x="1064.47" y="1459.90" width="15.20" height="11.30" fill="#73c0de"/>
<rect x="1064.47" y="1431.30" width="15.20" height="28.60" fill="#3ba272"/>
<rect x="1064.47" y="1425.80" width="15.20" height="5.50" fill="#fc8452"/>
<rect x="1064.47" y="1405.90" width="15.20" height="19.90" fill="#9a60b4"/>
<rect x="1064.47" y="1400.40" width="15.20" height="5.50" fill="#ea7ccc"/>
<rect x="1064.47" y="1379.10" width="15.20" height="21.30" fill="#8b4f92"/>
<rect x="1086.01" y="1547.20" width="15.20" height="13.80" fill="#5470c6"/>
<rect x="1086.01" y="1517.00" width="15.20" height="30.20" fill="#91cc75"/>
<rect x="1086.01" y="1506.30" width="15.20" height="10.70" fill="#fac858"/>
<rect x="1086.01" y="1457.60" width="15.20" height="48.70" fill="#ee6666"/>
<rect x="1086.01" y="1444.40" width="15.20" height="13.20" fill="#73c0de"/>
<rect x="1086.01" y="1415.40" width="15.20" height="29.00" fill="#3ba272"/>
<rect x="1086.01" y="1402.50" width="15.20" height="12.90" fill="#fc8452"/>
<rect x="1086.01" y="1371.90" width="15.20" height="30.60" fill="#9a60b4"/>
<rect x="1086.01" y="1362.80" width="15.20" height="9.10" fill="#ea7ccc"/>
<rect x="1086.01" y="1344.00" width="15.20" height="18.80" fill="#8b4f92"/>
<rect x="1107.54" y="1548.30" width="15.20" height="12.70" fill="#5470c6"/>
<rect x="1107.54" y="1483.40" width="15.20" height="64.90" fill="#91cc75"/>
<rect x="1107.54" y="1476.20" width="15.20" height="7.20" fill="#fac858"/>
<rect x="1107.54" y="1441.00" width="15.20" height="35.20" fill="#ee6666"/>
<rect x="1107.54" y="1422.20" width="15.20" height="18.80" fill="#73c0de"/>
<rect x="1107.54" y="1402.50" width="15.20" height="19.70" fill="#3ba272"/>
<rect x="1107.54" y="1384.30" width="15.20" height="18.20" fill="#fc8452"/>
<rect x="1107.54" y="1355.50" width="15.20" height="28.80" fill="#9a60b4"/>
<rect x="1107.54" y="1345.30" width="15.20" height="10.20" fill="#ea7ccc"/>
<rect x="1107.54" y="1312.90" width="15.20" height="32.40" fill="#8b4f92"/>
<rect x="1129.08" y="1537.40" width="15.20" height="23.60" fill="#5470c6"/>
<rect x="1129.08" y="1481.80" width="15.20" height="55.60" fill="#91cc75"/>
<rect x="1129.08" y="1471.20" width="15.20" height="10.60" fill="#fac858"/>
<rect x="1129.08" y="1426.30" width="15.20" height="44.90" fill="#ee6666"/>
<rect x="1129.08" y="1406.60" width="15.20" height="19.70" fill="#73c0de"/>
<rect x="1129.08" y="1391.10" width="15.20" height="15.50" fill="#3ba272"/>
<rect x="1129.08" y="1382.50" width="15.20" height="8.60" fill="#fc8452"/>
<rect x="1129.08" y="1369.10" width="15.20" height="13.40" fill="#9a60b4"/>
<rect x="1129.08" y="1363.50" width="15.20" height="5.60" fill="#ea7ccc"/>
<rect x="1129.08" y="1348.50" width="15.20" height="15.00" fill="#8b4f92"/>
<rect x="1150.61" y="1541.50" width="15.20" height="19.50" fill="#5470c6"/>
<rect x="1150.61" y="1495.50" width="15.20" height="46.00" fill="#91cc75"/>
<rect x="1150.61" y="1475.50" width="15.20" height="20.00" fill="#fac858"/>
<rect x="1150.61" y="1426.30" width="15.20" height="49.20" fill="#ee6666"/>
<rect x="1150.61" y="1398.00" width="15.20" height="28.30" fill="#73c0de"/>
<rect x="1150.61" y="1373.50" width="15.20" height="24.50" fill="#3ba272"/>
<rect x="1150.61" y="1344.70" width="15.20" height="28.80" fill="#fc8452"/>
<rect x="1150.61" y="1313.40" width="15.20" height="31.30" fill="#9a60b4"/>
<rect x="1150.61" y="1269.40" width="15.20" height="44.00" fill="#ea7ccc"/>
<rect x="1150.61" y="1234.00" width="15.20" height="35.40" fill="#8b4f92"/>
<rect x="1172.14" y="1530.60" width="15.20" height="30.40" fill="#5470c6"/>
<rect x="1172.14" y="1464.20" width="15.20" height="66.40" fill="#91cc75"/>
<rect x="1172.14" y="1451.20" width="15.20" height="13.00" fill="#fac858"/>
<rect x="1172.14" y="1408.80" width="15.20" height="42.40" fill="#ee6666"/>
<rect x="1172.14" y="1395.20" width="15.20" height="13.60" fill="#73c0de"/>
<rect x="1172.14" y="1366.70" width="15.20" height="28.50" fill="#3ba272"/>
<rect x="1172.14" y="1346.90" width="15.20" height="19.80" fill="#fc8452"/>
<rect x="1172.14" y="1324.70" width="15.20" height="22.20" fill="#9a60b4"/>
<rect x="1172.14" y="1232.90" width="15.20" height="91.80" fill="#ea7ccc"/>
<rect x="1172.14" y="1208.60" width="15.20" height="24.30" fill="#8b4f92"/>
<rect x="1193.68" y="1541.90" width="15.20" height="19.10" fill="#5470c6"/>
<rect x="1193.68" y="1468.90" width="15.20" height="73.00" fill="#91cc75"/>
<rect x="1193.68" y="1453.50" width="15.20" height="15.40" fill="#fac858"/>
<rect x="1193.68" y="1408.20" width="15.20" height="45.30" fill="#ee6666"/>
<rect x="1193.68" y="1376.90" width="15.20" height="31.30" fill="#73c0de"/>
<rect x="1193.68" y="1357.10" width="15.20" height="19.80" fill="#3ba272"/>
<rect x="1193.68" y="1338.30" width="15.20" height="18.80" fill="#fc8452"/>
<rect x="1193.68" y="1316.30" width="15.20" height="22.00" fill="#9a60b4"/>
<rect x="1193.68" y="1301.60" width="15.20" height="14.70" fill="#ea7ccc"/>
<rect x="1193.68" y="1266.40" width="15.20" height="35.20" fill="#8b4f92"/>
<rect x="1215.21" y="1537.90" width="15.20" height="23.10" fill="#5470c6"/>
<rect x="1215.21" y="1465.50" width="15.20" height="72.40" fill="#91cc75"/>
<rect x="1215.21" y="1447.80" width="15.20" height="17.70" fill="#fac858"/>
<rect x="1215.21" y="1390.50" width="15.20" height="57.30" fill="#ee6666"/>
<rect x="1215.21" y="1361.70" width="15.20" height="28.80" fill="#73c0de"/>
<rect x="1215.21" y="1326.10" width="15.20" height="35.60" fill="#3ba272"/>
<rect x="1215.21" y="1314.70" width="15.20" height="11.40" fill="#fc8452"/>
<rect x="1215.21" y="1277.30" width="15.20" height="37.40" fill="#9a60b4"/>
<rect x="1215.21" y="1265.30" width="15.20" height="12.00" fill="#ea7ccc"/>
<rect x="1215.21" y="1229.70" width="15.20" height="35.60" fill="#8b4f92"/>
<rect x="1236.75" y="1528.80" width="15.20" height="32.20" fill="#5470c6"/>
<rect x="1236.75" y="1464.40" width="15.20" height="64.40" fill="#91cc75"/>
<rect x="1236.75" y="1451.20" width="15.20" height="13.20" fill="#fac858"/>
<rect x="1236.75" y="1382.50" width="15.20" height="68.70" fill="#ee6666"/>
<rect x="1236.75" y="1360.50" width="15.20" height="22.00" fill="#73c0de"/>
<rect x="1236.75" y="1340.60" width="15.20" height="19.90" fill="#3ba272"/>
<rect x="1236.75" y="1329.50" width="15.20" height="11.10" fill="#fc8452"/>
<rect x="1236.75" y="1276.20" width="15.20" height="53.30" fill="#9a60b4"/>
<rect x="1236.75" y="1262.60" width="15.20" height="13.60" fill="#ea7ccc"/>
<rect x="1236.75" y="1237.40" width="15.20" height="25.20" fill="#8b4f92"/>
<rect x="1258.29" y="1515.20" width="15.20" height="45.80" fill="#5470c6"/>
<rect x="1258.29" y="1442.60" width="15.20" height="72.60" fill="#91cc75"/>
<rect x="1258.29" y="1407.00" width="15.20" height="35.60" fill="#fac858"/>
<rect x="1258.29" y="1332.60" width="15.20" height="74.40" fill="#ee6666"/>
<rect x="1258.29" y="1301.60" width="15.20" height="31.00" fill="#73c0de"/>
<rect x="1258.29" y="1259.60" width="15.20" height="42.00" fill="#3ba272"/>
<rect x="1258.29" y="1213.10" width="15.20" height="46.50" fill="#fc8452"/>
<rect x="1258.29" y="1184.50" width="15.20" height="28.60" fill="#9a60b4"/>
<rect x="1258.29" y="932.80" width="15.20" height="251.70" fill="#ea7ccc"/>
<rect x="1258.29" y="881.80" width="15.20" height="51.00" fill="#8b4f92"/>
<rect x="1279.82" y="1528.80" width="15.20" height="32.20" fill="#5470c6"/>
<rect x="1279.82" y="1471.20" width="15.20" height="57.60" fill="#91cc75"/>
<rect x="1279.82" y="1459.90" width="15.20" height="11.30" fill="#fac858"/>
<rect x="1279.82" y="1402.50" width="15.20" height="57.40" fill="#ee6666"/>
<rect x="1279.82" y="1382.80" width="15.20" height="19.70" fill="#73c0de"/>
<rect x="1279.82" y="1359.00" width="15.20" height="23.80" fill="#3ba272"/>
<rect x="1279.82" y="1328.30" width="15.20" height="30.70" fill="#fc8452"/>
<rect x="1279.82" y="1281.20" width="15.20" height="47.10" fill="#9a60b4"/>
<rect x="1279.82" y="1268.20" width="15.20" height="13.00" fill="#ea7ccc"/>
<rect x="1279.82" y="1243.80" width="15.20" height="24.40" fill="#8b4f92"/>
<rect x="1301.36" y="1524.30" width="15.20" height="36.70" fill="#5470c6"/>
<rect x="1301.36" y="1480.00" width="15.20" height="44.30" fill="#91cc75"/>
<rect x="1301.36" y="1457.60" width="15.20" height="22.40" fill="#fac858"/>
<rect x="1301.36" y="1403.60" width="15.20" height="54.00" fill="#ee6666"/>
<rect x="1301.36" y="1385.90" width="15.20" height="17.70" fill="#73c0de"/>
<rect x="1301.36" y="1369.10" width="15.20" height="16.80" fill="#3ba272"/>
<rect x="1301.36" y="1356.00" width="15.20" height="13.10" fill="#fc8452"/>
<rect x="1301.36" y="1320.40" width="15.20" height="35.60" fill="#9a60b4"/>
<rect x="1301.36" y="1294.80" width="15.20" height="25.60" fill="#ea7ccc"/>
<rect x="1301.36" y="1277.10" width="15.20" height="17.70" fill="#8b4f92"/>
<rect x="1322.89" y="1534.50" width="15.20" height="26.50" fill="#5470c6"/>
<rect x="1322.89" y="1463.70" width="15.20" height="70.80" fill="#91cc75"/>
<rect x="1322.89" y="1434.70" width="15.20" height="29.00" fill="#fac858"/>
<rect x="1322.89" y="1368.50" width="15.20" height="66.20" fill="#ee6666"/>
<rect x="1322.89" y="1353.00" width="15.20" height="15.50" fill="#73c0de"/>
<rect x="1322.89" y="1329.50" width="15.20" height="23.50" fill="#3ba272"/>
<rect x="1322.89" y="1311.80" width="15.20" height="17.70" fill="#fc8452"/>
<rect x="1322.89" y="1296.40" width="15.20" height="15.40" fill="#9a60b4"/>
<rect x="1322.89" y="1175.80" width="15.20" height="120.60" fill="#ea7ccc"/>
<rect x="1322.89" y="1140.10" width="15.20" height="35.70" fill="#8b4f92"/>
<rect x="1344.42" y="1539.70" width="15.20" height="21.30" fill="#5470c6"/>
<rect x="1344.42" y="1470.10" width="15.20" height="69.60" fill="#91cc75"/>
<rect x="1344.42" y="1443.80" width="15.20" height="26.30" fill="#fac858"/>
<rect x="1344.42" y="1374.80" width="15.20" height="69.00" fill="#ee6666"/>
<rect x="1344.42" y="1342.80" width="15.20" height="32.00" fill="#73c0de"/>
<rect x="1344.42" y="1321.50" width="15.20" height="21.30" fill="#3ba272"/>
<rect x="1344.42" y="1312.90" width="15.20" height="8.60" fill="#fc8452"/>
<rect x="1344.42" y="1299.30" width="15.20" height="13.60" fill="#9a60b4"/>
<rect x="1344.42" y="1268.70" width="15.20" height="30.60" fill="#ea7ccc"/>
<rect x="1344.42" y="1229.00" width="15.20" height="39.70" fill="#8b4f92"/>
<rect x="1365.96" y="1534.50" width="15.20" height="26.50" fill="#5470c6"/>
<rect x="1365.96" y="1472.10" width="15.20" height="62.40" fill="#91cc75"/>
<rect x="1365.96" y="1452.40" width="15.20" height="19.70" fill="#fac858"/>
<rect x="1365.96" y="1396.80" width="15.20" height="55.60" fill="#ee6666"/>
<rect x="1365.96" y="1374.60" width="15.20" height="22.20" fill="#73c0de"/>
<rect x="1365.96" y="1357.80" width="15.20" height="16.80" fill="#3ba272"/>
<rect x="1365.96" y="1351.50" width="15.20" height="6.30" fill="#fc8452"/>
<rect x="1365.96" y="1329.20" width="15.20" height="22.30" fill="#9a60b4"/>
<rect x="1365.96" y="1293.60" width="15.20" height="35.60" fill="#ea7ccc"/>
<rect x="1365.96" y="1254.00" width="15.20" height="39.60" fill="#8b4f92"/>
<rect x="1387.50" y="1546.50" width="15.20" height="14.50" fill="#5470c6"/>
<rect x="1387.50" y="1504.50" width="15.20" height="42.00" fill="#91cc75"/>
<rect x="1387.50" y="1495.50" width="15.20" height="9.00" fill="#fac858"/>
<rect x="1387.50" y="1440.40" width="15.20" height="55.10" fill="#ee6666"/>
<rect x="1387.50" y="1422.40" width="15.20" height="18.00" fill="#73c0de"/>
<rect x="1387.50" y="1407.00" width="15.20" height="15.40" fill="#3ba272"/>
<rect x="1387.50" y="1381.60" width="15.20" height="25.40" fill="#fc8452"/>
<rect x="1387.50" y="1352.10" width="15.20" height="29.50" fill="#9a60b4"/>
<rect x="1387.50" y="1322.70" width="15.20" height="29.40" fill="#ea7ccc"/>
<rect x="1387.50" y="1288.00" width="15.20" height="34.70" fill="#8b4f92"/>
<rect x="1409.03" y="1544.20" width="15.20" height="16.80" fill="#5470c6"/>
<rect x="1409.03" y="1490.90" width="15.20" height="53.30" fill="#91cc75"/>
<rect x="1409.03" y="1482.30" width="15.20" height="8.60" fill="#fac858"/>
<rect x="1409.03" y="1455.80" width="15.20" height="26.50" fill="#ee6666"/>
<rect x="1409.03" y="1433.50" width="15.20" height="22.30" fill="#73c0de"/>
<rect x="1409.03" y="1414.30" width="15.20" height="19.20" fill="#3ba272"/>
<rect x="1409.03" y="1393.40" width="15.20" height="20.90" fill="#fc8452"/>
<rect x="1409.03" y="1366.90" width="15.20" height="26.50" fill="#9a60b4"/>
<rect x="1409.03" y="1328.30" width="15.20" height="38.60" fill="#ea7ccc"/>
<rect x="1409.03" y="1309.10" width="15.20" height="19.20" fill="#8b4f92"/>
<rect x="1430.57" y="1544.20" width="15.20" height="16.80" fill="#5470c6"/>
<rect x="1430.57" y="1524.30" width="15.20" height="19.90" fill="#91cc75"/>
<rect x="1430.57" y="1515.40" width="15.20" height="8.90" fill="#fac858"/>
<rect x="1430.57" y="1474.60" width="15.20" height="40.80" fill="#ee6666"/>
<rect x="1430.57" y="1460.30" width="15.20" height="14.30" fill="#73c0de"/>
<rect x="1430.57" y="1449.00" width="15.20" height="11.30" fill="#3ba272"/>
<rect x="1430.57" y="1411.60" width="15.20" height="37.40" fill="#fc8452"/>
<rect x="1430.57" y="1371.20" width="15.20" height="40.40" fill="#9a60b4"/>
<rect x="1430.57" y="1340.60" width="15.20" height="30.60" fill="#ea7ccc"/>
<rect x="1430.57" y="1309.50" width="15.20" height="31.10" fill="#8b4f92"/>
<rect x="1452.10" y="1533.30" width="15.20" height="27.70" fill="#5470c6"/>
<rect x="1452.10" y="1484.60" width="15.20" height="48.70" fill="#91cc75"/>
<rect x="1452.10" y="1468.90" width="15.20" height="15.70" fill="#fac858"/>
<rect x="1452.10" y="1419.50" width="15.20" height="49.40" fill="#ee6666"/>
<rect x="1452.10" y="1403.60" width="15.20" height="15.90" fill="#73c0de"/>
<rect x="1452.10" y="1383.70" width="15.20" height="19.90" fill="#3ba272"/>
<rect x="1452.10" y="1371.90" width="15.20" height="11.80" fill="#fc8452"/>
<rect x="1452.10" y="1311.30" width="15.20" height="60.60" fill="#9a60b4"/>
<rect x="1452.10" y="1277.80" width="15.20" height="33.50" fill="#ea7ccc"/>
<rect x="1452.10" y="1227.40" width="15.20" height="50.40" fill="#8b4f92"/>
<rect x="1473.63" y="1543.10" width="15.20" height="17.90" fill="#5470c6"/>
<rect x="1473.63" y="1501.10" width="15.20" height="42.00" fill="#91cc75"/>
<rect x="1473.63" y="1481.20" width="15.20" height="19.90" fill="#fac858"/>
<rect x="1473.63" y="1438.10" width="15.20" height="43.10" fill="#ee6666"/>
<rect x="1473.63" y="1417.90" width="15.20" height="20.20" fill="#73c0de"/>
<rect x="1473.63" y="1393.90" width="15.20" height="24.00" fill="#3ba272"/>
<rect x="1473.63" y="1378.20" width="15.20" height="15.70" fill="#fc8452"/>
<rect x="1473.63" y="1356.00" width="15.20" height="22.20" fill="#9a60b4"/>
<rect x="1473.63" y="1279.60" width="15.20" height="76.40" fill="#ea7ccc"/>
<rect x="1473.63" y="1261.90" width="15.20" height="17.70" fill="#8b4f92"/>
<rect x="1495.17" y="1532.20" width="15.20" height="28.80" fill="#5470c6"/>
<rect x="1495.17" y="1489.80" width="15.20" height="42.40" fill="#91cc75"/>
<rect x="1495.17" y="1478.50" width="15.20" height="11.30" fill="#fac858"/>
<rect x="1495.17" y="1427.90" width="15.20" height="50.60" fill="#ee6666"/>
<rect x="1495.17" y="1408.20" width="15.20" height="19.70" fill="#73c0de"/>
<rect x="1495.17" y="1388.20" width="15.20" height="20.00" fill="#3ba272"/>
<rect x="1495.17" y="1368.50" width="15.20" height="19.70" fill="#fc8452"/>
<rect x="1495.17" y="1337.20" width="15.20" height="31.30" fill="#9a60b4"/>
<rect x="1495.17" y="1265.30" width="15.20" height="71.90" fill="#ea7ccc"/>
<rect x="1495.17" y="1249.40" width="15.20" height="15.90" fill="#8b4f92"/>
<rect x="1516.70" y="1546.50" width="15.20" height="14.50" fill="#5470c6"/>
<rect x="1516.70" y="1502.30" width="15.20" height="44.20" fill="#91cc75"/>
<rect x="1516.70" y="1477.80" width="15.20" height="24.50" fill="#fac858"/>
<rect x="1516.70" y="1446.70" width="15.20" height="31.10" fill="#ee6666"/>
<rect x="1516.70" y="1437.60" width="15.20" height="9.10" fill="#73c0de"/>
<rect x="1516.70" y="1411.60" width="15.20" height="26.00" fill="#3ba272"/>
<rect x="1516.70" y="1404.80" width="15.20" height="6.80" fill="#fc8452"/>
<rect x="1516.70" y="1380.30" width="15.20" height="24.50" fill="#9a60b4"/>
<rect x="1516.70" y="1339.70" width="15.20" height="40.60" fill="#ea7ccc"/>
<rect x="1516.70" y="1312.90" width="15.20" height="26.80" fill="#8b4f92"/>
<rect x="1538.24" y="1526.10" width="15.20" height="34.90" fill="#5470c6"/>
<rect x="1538.24" y="1454.60" width="15.20" height="71.50" fill="#91cc75"/>
<rect x="1538.24" y="1427.90" width="15.20" height="26.70" fill="#fac858"/>
<rect x="1538.24" y="1368.50" width="15.20" height="59.40" fill="#ee6666"/>
<rect x="1538.24" y="1349.90" width="15.20" height="18.60" fill="#73c0de"/>
<rect x="1538.24" y="1316.30" width="15.20" height="33.60" fill="#3ba272"/>
<rect x="1538.24" y="1300.40" width="15.20" height="15.90" fill="#fc8452"/>
<rect x="1538.24" y="1260.30" width="15.20" height="40.10" fill="#9a60b4"/>
<rect x="1538.24" y="1227.40" width="15.20" height="32.90" fill="#ea7ccc"/>
<rect x="1538.24" y="1201.80" width="15.20" height="25.60" fill="#8b4f92"/>
<rect x="1559.78" y="1522.00" width="15.20" height="39.00" fill="#5470c6"/>
<rect x="1559.78" y="1423.60" width="15.20" height="98.40" fill="#91cc75"/>
<rect x="1559.78" y="1416.80" width="15.20" height="6.80" fill="#fac858"/>
<rect x="1559.78" y="1351.50" width="15.20" height="65.30" fill="#ee6666"/>
<rect x="1559.78" y="1316.30" width="15.20" height="35.20" fill="#73c0de"/>
<rect x="1559.78" y="1275.00" width="15.20" height="41.30" fill="#3ba272"/>
<rect x="1559.78" y="1252.80" width="15.20" height="22.20" fill="#fc8452"/>
<rect x="1559.78" y="1213.10" width="15.20" height="39.70" fill="#9a60b4"/>
<rect x="1559.78" y="1198.60" width="15.20" height="14.50" fill="#ea7ccc"/>
<rect x="1559.78" y="1172.10" width="15.20" height="26.50" fill="#8b4f92"/>
<rect x="1581.31" y="1528.80" width="15.20" height="32.20" fill="#5470c6"/>
<rect x="1581.31" y="1475.50" width="15.20" height="53.30" fill="#91cc75"/>
<rect x="1581.31" y="1446.70" width="15.20" height="28.80" fill="#fac858"/>
<rect x="1581.31" y="1409.30" width="15.20" height="37.40" fill="#ee6666"/>
<rect x="1581.31" y="1390.50" width="15.20" height="18.80" fill="#73c0de"/>
<rect x="1581.31" y="1359.40" width="15.20" height="31.10" fill="#3ba272"/>
<rect x="1581.31" y="1326.10" width="15.20" height="33.30" fill="#fc8452"/>
<rect x="1581.31" y="1286.40" width="15.20" height="39.70" fill="#9a60b4"/>
<rect x="1581.31" y="1275.50" width="15.20" height="10.90" fill="#ea7ccc"/>
<rect x="1581.31" y="1229.70" width="15.20" height="45.80" fill="#8b4f92"/>
<rect x="1602.85" y="1526.50" width="15.20" height="34.50" fill="#5470c6"/>
<rect x="1602.85" y="1431.30" width="15.20" height="95.20" fill="#91cc75"/>
<rect x="1602.85" y="1407.00" width="15.20" height="24.30" fill="#fac858"/>
<rect x="1602.85" y="1354.90" width="15.20" height="52.10" fill="#ee6666"/>
<rect x="1602.85" y="1334.90" width="15.20" height="20.00" fill="#73c0de"/>
<rect x="1602.85" y="1286.40" width="15.20" height="48.50" fill="#3ba272"/>
<rect x="1602.85" y="1255.50" width="15.20" height="30.90" fill="#fc8452"/>
<rect x="1602.85" y="1209.70" width="15.20" height="45.80" fill="#9a60b4"/>
<rect x="1602.85" y="1204.50" width="15.20" height="5.20" fill="#ea7ccc"/>
<rect x="1602.85" y="1174.10" width="15.20" height="30.40" fill="#8b4f92"/>
<rect x="1624.38" y="1516.50" width="15.20" height="44.50" fill="#5470c6"/>
<rect x="1624.38" y="1460.30" width="15.20" height="56.20" fill="#91cc75"/>
<rect x="1624.38" y="1424.70" width="15.20" height="35.60" fill="#fac858"/>
<rect x="1624.38" y="1356.00" width="15.20" height="68.70" fill="#ee6666"/>
<rect x="1624.38" y="1327.20" width="15.20" height="28.80" fill="#73c0de"/>
<rect x="1624.38" y="1304.30" width="15.20" height="22.90" fill="#3ba272"/>
<rect x="1624.38" y="1268.70" width="15.20" height="35.60" fill="#fc8452"/>
<rect x="1624.38" y="1217.70" width="15.20" height="51.00" fill="#9a60b4"/>
<rect x="1624.38" y="1203.40" width="15.20" height="14.30" fill="#ea7ccc"/>
<rect x="1624.38" y="1163.00" width="15.20" height="40.40" fill="#8b4f92"/>
<rect x="1645.91" y="1510.90" width="15.20" height="50.10" fill="#5470c6"/>
<rect x="1645.91" y="1444.40" width="15.20" height="66.50" fill="#91cc75"/>
<rect x="1645.91" y="1424.70" width="15.20" height="19.70" fill="#fac858"/>
<rect x="1645.91" y="1368.50" width="15.20" height="56.20" fill="#ee6666"/>
<rect x="1645.91" y="1343.50" width="15.20" height="25.00" fill="#73c0de"/>
<rect x="1645.91" y="1304.30" width="15.20" height="39.20" fill="#3ba272"/>
<rect x="1645.91" y="1271.00" width="15.20" height="33.30" fill="#fc8452"/>
<rect x="1645.91" y="1234.20" width="15.20" height="36.80" fill="#9a60b4"/>
<rect x="1645.91" y="1229.70" width="15.20" height="4.50" fill="#ea7ccc"/>
<rect x="1645.91" y="1210.20" width="15.20" height="19.50" fill="#8b4f92"/>
<rect x="1667.45" y="1526.50" width="15.20" height="34.50" fill="#5470c6"/>
<rect x="1667.45" y="1455.30" width="15.20" height="71.20" fill="#91cc75"/>
<rect x="1667.45" y="1417.90" width="15.20" height="37.40" fill="#fac858"/>
<rect x="1667.45" y="1359.40" width="15.20" height="58.50" fill="#ee6666"/>
<rect x="1667.45" y="1332.90" width="15.20" height="26.50" fill="#73c0de"/>
<rect x="1667.45" y="1283.00" width="15.20" height="49.90" fill="#3ba272"/>
<rect x="1667.45" y="1238.80" width="15.20" height="44.20" fill="#fc8452"/>
<rect x="1667.45" y="1174.30" width="15.20" height="64.50" fill="#9a60b4"/>
<rect x="1667.45" y="1160.90" width="15.20" height="13.40" fill="#ea7ccc"/>
<rect x="1667.45" y="1052.30" width="15.20" height="108.60" fill="#8b4f92"/>
<rect x="1688.98" y="1551.00" width="15.20" height="10.00" fill="#5470c6"/>
<rect x="1688.98" y="1503.40" width="15.20" height="47.60" fill="#91cc75"/>
<rect x="1688.98" y="1481.20" width="15.20" height="22.20" fill="#fac858"/>
<rect x="1688.98" y="1433.50" width="15.20" height="47.70" fill="#ee6666"/>
<rect x="1688.98" y="1425.20" width="15.20" height="8.30" fill="#73c0de"/>
<rect x="1688.98" y="1392.70" width="15.20" height="32.50" fill="#3ba272"/>
<rect x="1688.98" y="1382.10" width="15.20" height="10.60" fill="#fc8452"/>
<rect x="1688.98" y="1357.10" width="15.20" height="25.00" fill="#9a60b4"/>
<rect x="1688.98" y="1351.90" width="15.20" height="5.20" fill="#ea7ccc"/>
<rect x="1688.98" y="1272.10" width="15.20" height="79.80" fill="#8b4f92"/>
<rect x="161" y="1561" width="1543" height="2" fill="#555"/>
</svg>
</body></html>
